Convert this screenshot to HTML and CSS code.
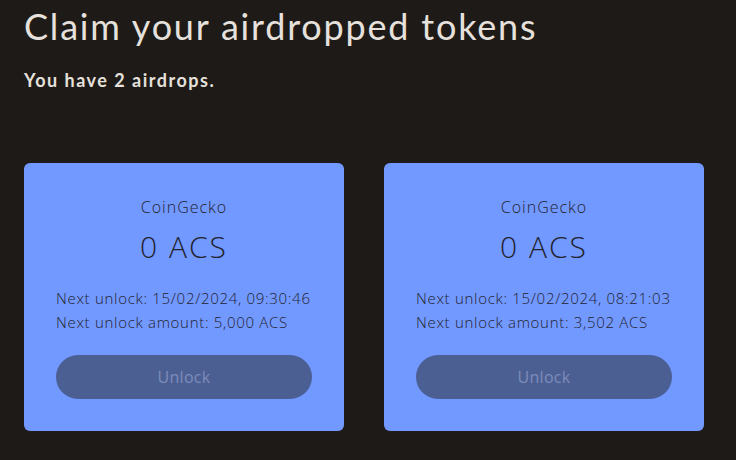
FILE: index.html
```html
<!DOCTYPE html>
<html>
<head>
<meta charset="utf-8">
<link rel="stylesheet" href="styles.css">
</head>
<body>
<main class="page">
  <h1 class="title">Claim your airdropped tokens</h1>
  <p class="subtitle">You have 2 airdrops.</p>
  <section class="cards">
    <div class="card">
      <div class="card-name">CoinGecko</div>
      <div class="card-amount">0 ACS</div>
      <div class="card-info">
        <div>Next unlock: 15/02/2024, 09:30:46</div>
        <div>Next unlock amount: 5,000 ACS</div>
      </div>
      <button class="unlock" disabled>Unlock</button>
    </div>
    <div class="card">
      <div class="card-name">CoinGecko</div>
      <div class="card-amount">0 ACS</div>
      <div class="card-info">
        <div>Next unlock: 15/02/2024, 08:21:03</div>
        <div>Next unlock amount: 3,502 ACS</div>
      </div>
      <button class="unlock" disabled>Unlock</button>
    </div>
  </section>
</main>
</body>
</html>
```
FILE: styles.css
```css
* { box-sizing: border-box; }
html, body { margin: 0; padding: 0; }
body {
  background: #1e1a17;
  width: 736px;
  height: 460px;
  overflow: hidden;
  font-family: "Lato", "Open Sans", sans-serif;
}
.page {
  padding: 4px 24px 0 24px;
}
.title {
  margin: 0;
  font-family: "Lato", sans-serif;
  font-weight: 400;
  font-size: 36px;
  line-height: 44px;
  letter-spacing: 1.8px;
  color: #e6e1dc;
}
.subtitle {
  margin: 20px 0 0 0;
  font-family: "Lato", sans-serif;
  font-weight: 700;
  font-size: 18px;
  line-height: 24px;
  letter-spacing: 1.5px;
  color: #e6e1dc;
}
.cards {
  display: flex;
  gap: 40px;
  margin-top: 71px;
}
.card {
  width: 320px;
  background: #7299ff;
  border-radius: 6px;
  padding: 32px;
  display: flex;
  flex-direction: column;
  color: #23232f;
  font-family: "Open Sans", sans-serif;
  font-weight: 300;
}
.card-name {
  text-align: center;
  font-size: 16px;
  line-height: 24px;
  letter-spacing: 1px;
}
.card-amount {
  text-align: center;
  font-size: 30px;
  line-height: 40px;
  letter-spacing: 2px;
  margin-top: 8px;
}
.card-info {
  margin-top: 19px;
  font-size: 15px;
  line-height: 24px;
  letter-spacing: 0.7px;
}
.unlock {
  margin-top: 21px;
  height: 44px;
  width: 100%;
  border: none;
  border-radius: 22px;
  background: #4c5f93;
  color: #7d8cba;
  font-family: "Open Sans", sans-serif;
  font-size: 16px;
  font-weight: 400;
  letter-spacing: 0.3px;
}
```
